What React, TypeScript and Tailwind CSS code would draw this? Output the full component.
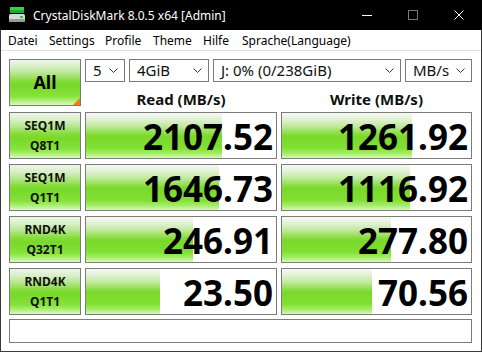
import React from "react";

const barBg =
  "linear-gradient(to bottom, #f6f9f3 0%, #e2f1d6 14%, #bfe99a 30%, #8fdf4c 44%, #7ad82b 52%, #80e032 78%, #a6ec6c 90%, #d6f8b8 100%)";
const btnBg =
  "linear-gradient(to bottom, #eef5e9 0%, #d6eec4 16%, #b0e584 32%, #86dc3c 46%, #78d82a 56%, #86e23a 80%, #b4f082 92%, #dcfac4 100%)";

const rows = [
  { l1: "SEQ1M", l2: "Q8T1", r: "2107.52", w: "1261.92", rb: 136, wb: 130 },
  { l1: "SEQ1M", l2: "Q1T1", r: "1646.73", w: "1116.92", rb: 133, wb: 128 },
  { l1: "RND4K", l2: "Q32T1", r: "246.91", w: "277.80", rb: 107, wb: 109 },
  { l1: "RND4K", l2: "Q1T1", r: "23.50", w: "70.56", rb: 74, wb: 90 },
];

const sans = { fontFamily: '"Noto Sans", "Open Sans", sans-serif' };

function Chevron() {
  return (
    <svg width="9" height="6" viewBox="0 0 9 6" className="shrink-0">
      <polyline points="0.5,0.5 4.5,4.5 8.5,0.5" fill="none" stroke="#333" strokeWidth="1" />
    </svg>
  );
}

function Drop({ w, text }: { w: string; text: string }) {
  return (
    <div className={`${w} h-full border border-[#7a7a7a] bg-white flex items-center justify-between pl-[7px] pr-[6px] text-[15px] text-[#111]`}>
      <span className="leading-none">{text}</span>
      <Chevron />
    </div>
  );
}

function Result({ value, bar, w }: { value: string; bar: number; w: string }) {
  return (
    <div className={`relative ${w} h-full border border-[#7c7c7c] bg-white`}>
      <div className="absolute left-0 top-0 bottom-0" style={{ width: bar, background: barBg }} />
      <div className="relative h-full flex items-center justify-end pr-[3px] pt-[1px] text-[35px] font-bold text-black leading-none">
        {value}
      </div>
    </div>
  );
}

export default function App() {
  return (
    <div className="w-[482px] h-[352px] bg-black flex flex-col overflow-hidden select-none" style={sans}>
      {/* Title bar */}
      <div className="h-[30px] bg-black flex items-center text-white shrink-0">
        <div className="w-[33px] h-full flex items-center justify-center pl-[1px]">
          <svg width="18" height="18" viewBox="0 0 18 18">
            <rect x="2" y="1" width="14" height="3" fill="#3fcf3f" />
            <rect x="2" y="4" width="14" height="3" fill="#21a83a" />
            <rect x="1" y="8" width="16" height="8" rx="1.5" fill="#d8d8d8" />
            <rect x="1" y="13" width="16" height="3" rx="1" fill="#9a9a9a" />
            <rect x="12" y="10" width="3" height="2" fill="#35c435" />
          </svg>
        </div>
        <span className="text-[12px] leading-none pt-[2px]">CrystalDiskMark 8.0.5 x64 [Admin]</span>
        <div className="ml-auto flex h-full">
          <div className="w-[46px] h-full flex items-center justify-center">
            <div className="w-[10px] h-px bg-white" />
          </div>
          <div className="w-[46px] h-full flex items-center justify-center">
            <div className="w-[10px] h-[10px] border border-[#777]" />
          </div>
          <div className="w-[46px] h-full flex items-center justify-center">
            <svg width="10" height="10" viewBox="0 0 10 10">
              <path d="M0.5 0.5 L9.5 9.5 M9.5 0.5 L0.5 9.5" stroke="white" strokeWidth="1" />
            </svg>
          </div>
        </div>
      </div>

      {/* Body with frame */}
      <div className="flex-1 flex flex-col border-x border-b border-[#3a3a3a] bg-white">
        {/* Menu */}
        <div className="h-[20px] bg-white flex items-center text-[12px] text-black pl-[7px] pt-[2px] shrink-0">
          <span className="w-[41px]">Datei</span>
          <span className="w-[56px]">Settings</span>
          <span className="w-[48px]">Profile</span>
          <span className="w-[50px]">Theme</span>
          <span className="w-[39px]">Hilfe</span>
          <span>Sprache(Language)</span>
        </div>
        <div className="h-px bg-[#e2e2e2] shrink-0" />

        {/* Client */}
        <div className="flex-1 bg-white pl-[8px] pt-[8px] flex flex-col">
          <div className="flex gap-[4px] h-[53px]">
            <div
              className="relative w-[72px] h-[47px] border border-[#7a7a7a] flex items-center justify-center text-[18px] font-bold text-black"
              style={{ background: btnBg }}
            >
              All
              <svg width="7" height="7" viewBox="0 0 7 7" className="absolute right-0 bottom-0">
                <polygon points="7,0 7,7 0,7" fill="#f07a18" />
              </svg>
            </div>
            <div className="w-[387px] flex flex-col">
              <div className="h-[23px] flex gap-[4px]">
                <Drop w="w-[40px]" text="5" />
                <Drop w="w-[80px]" text="4GiB" />
                <Drop w="w-[188px]" text="J: 0% (0/238GiB)" />
                <Drop w="w-[67px]" text="MB/s" />
              </div>
              <div className="flex-1 flex gap-[4px] items-center pt-[4px] text-[15px] font-bold text-[#111]">
                <div className="w-[192px] text-center">Read (MB/s)</div>
                <div className="w-[191px] text-center">Write (MB/s)</div>
              </div>
            </div>
          </div>

          <div className="flex flex-col gap-[5px]">
            {rows.map((r) => (
              <div key={r.l1 + r.l2} className="flex gap-[4px] h-[47px]">
                <div
                  className="w-[72px] h-full border border-[#7a7a7a] flex flex-col items-center justify-center text-[12px] font-bold text-[#111] leading-[20px]"
                  style={{ background: btnBg }}
                >
                  <span>{r.l1}</span>
                  <span>{r.l2}</span>
                </div>
                <Result value={r.r} bar={r.rb} w="w-[192px]" />
                <Result value={r.w} bar={r.wb} w="w-[191px]" />
              </div>
            ))}
          </div>

          <div className="mt-[4px] w-[463px] h-[24px] border border-[#7c7c7c] bg-white" />
        </div>
      </div>
    </div>
  );
}
